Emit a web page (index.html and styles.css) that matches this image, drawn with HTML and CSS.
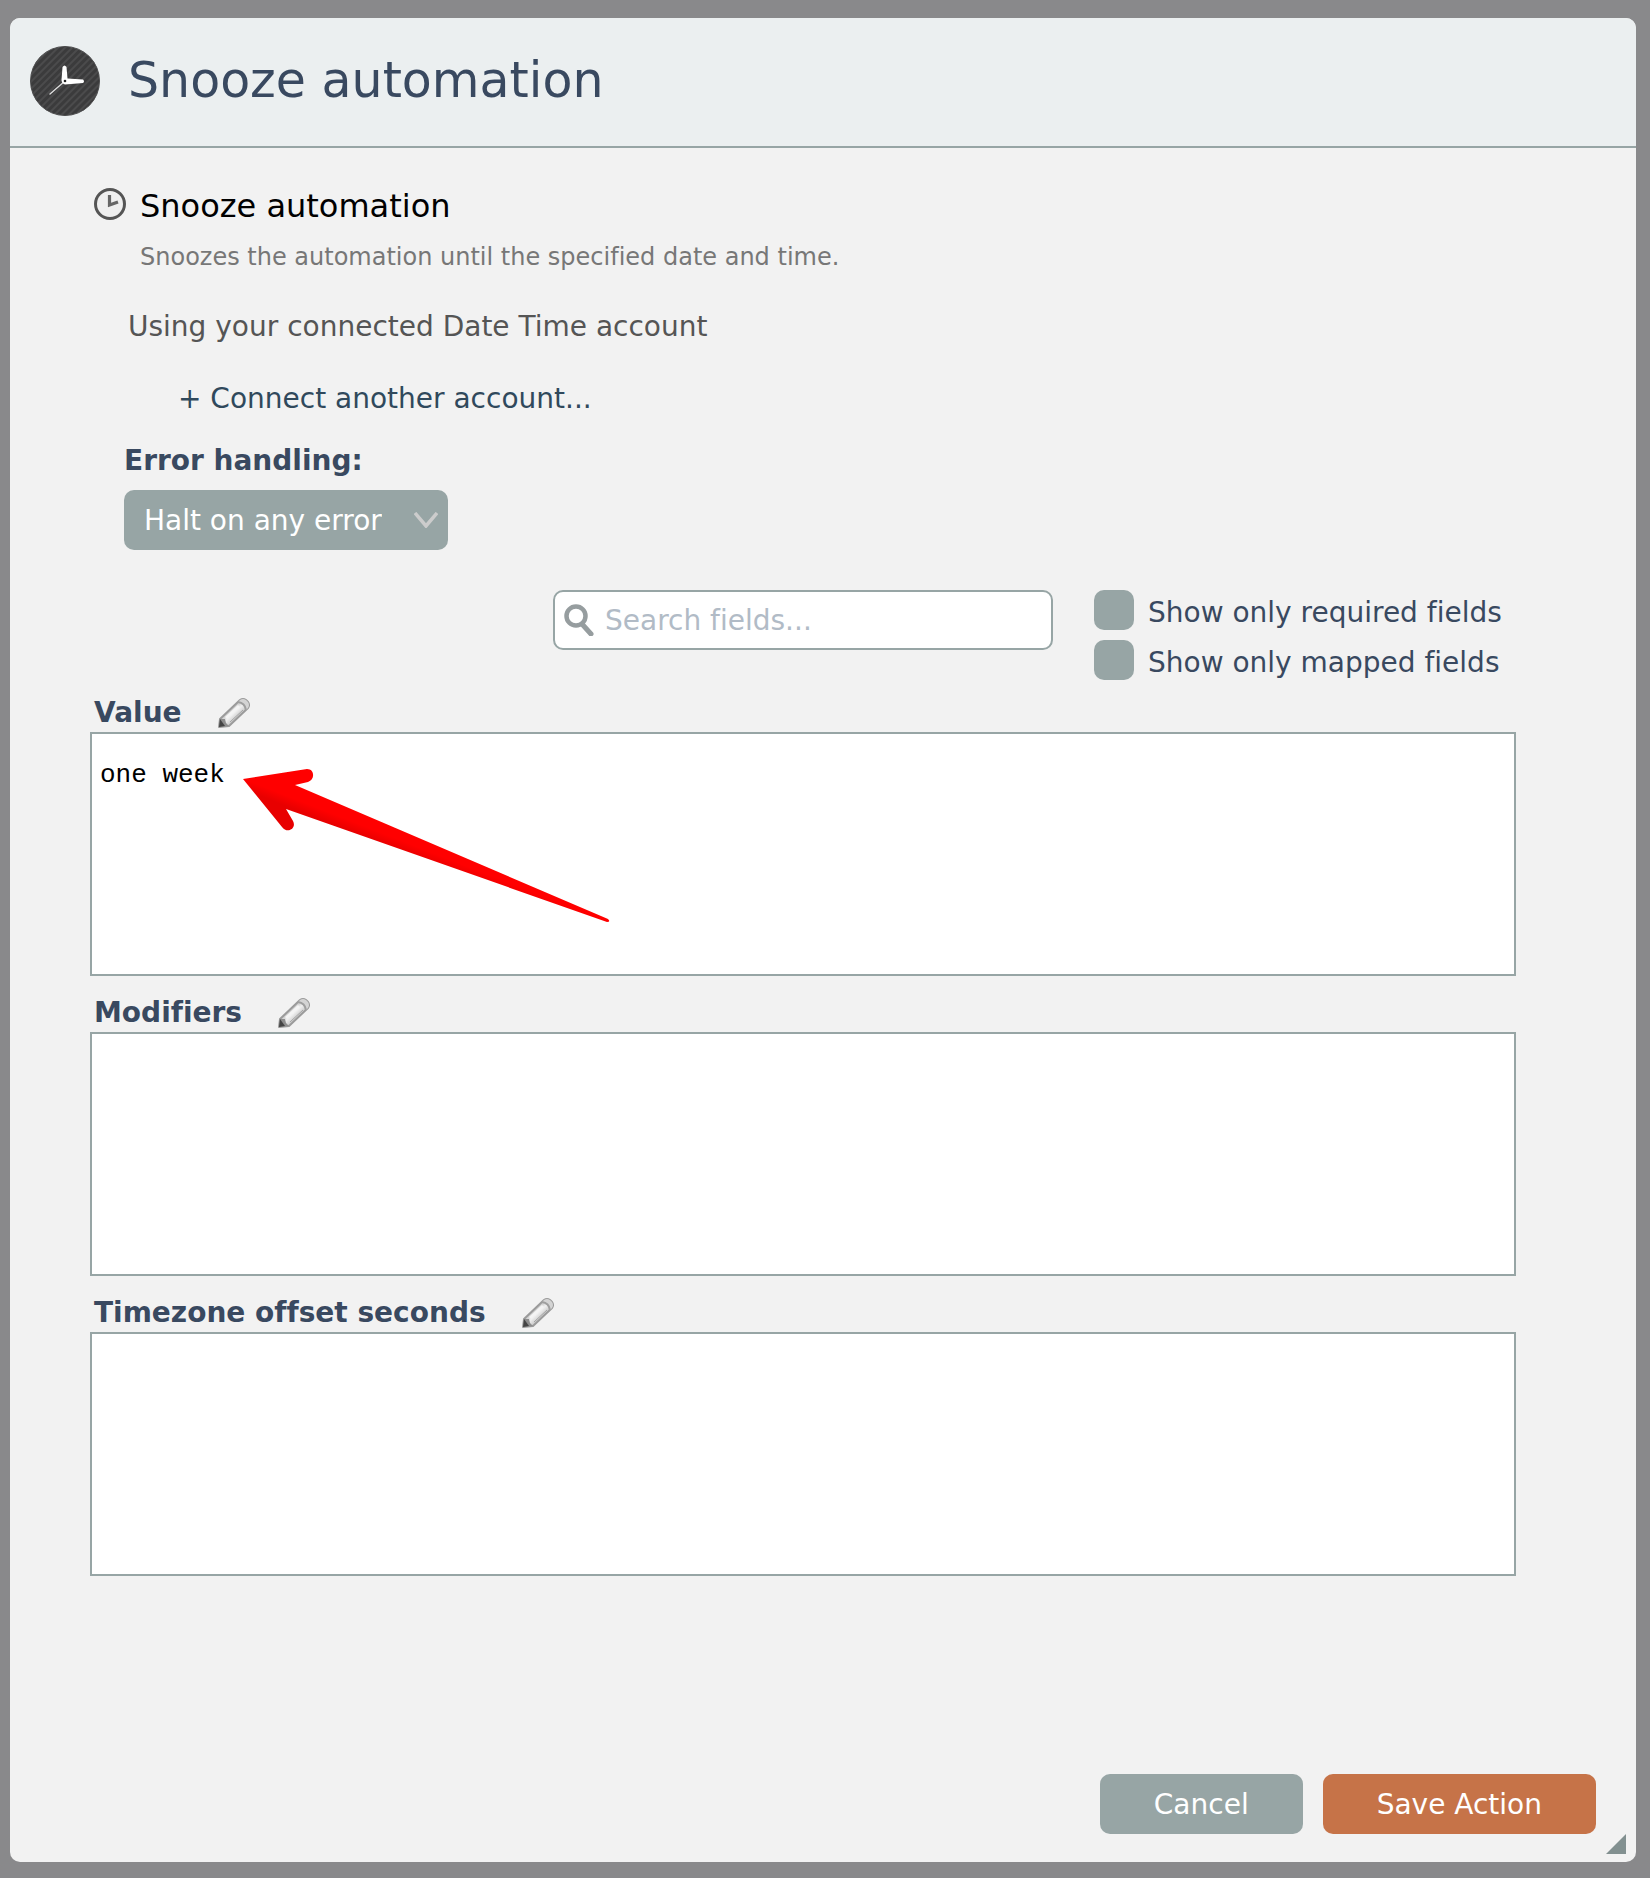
FILE: index.html
```html
<!DOCTYPE html>
<html lang="en">
<head>
    <meta charset="UTF-8">
    <meta name="viewport" content="width=device-width, initial-scale=1.0">
    <title>Snooze automation</title>
    <link rel="stylesheet" href="styles.css">
</head>
<body>

    <!-- shared pencil icon -->
    <svg class="sprite" aria-hidden="true">
        <defs>
            <linearGradient id="pencil-fill" x1="0" y1="0" x2="1" y2="1">
                <stop offset="0.3" stop-color="#a8a8a8"/>
                <stop offset="0.5" stop-color="#f0f0f0"/>
                <stop offset="0.75" stop-color="#a8a8a8"/>
            </linearGradient>
        </defs>
        <symbol id="pencil" viewBox="0 0 32 32">
            <path d="M2 22 L22 3 Q25 1 28 3 L30 5 Q32 8 30 11 L11 29 L1 30 Z" fill="url(#pencil-fill)" stroke="#9b9b9b" stroke-width="2" stroke-linejoin="round"/>
            <path d="M22 3 Q25 1 28 3 L30 5 Q32 8 30 11 L28 13 Q27 6 20 5 Z" fill="#d4d4d4"/>
            <path d="M20 5 Q27 6 28 13" fill="none" stroke="#9f9f9f" stroke-width="2"/>
            <path d="M8 21 L21 9" stroke="#f4f4f4" stroke-width="3"/>
            <path d="M12 25 L25 13" stroke="#a3a3a3" stroke-width="1"/>
            <path d="M2 22 L7 22 L8 26 L11 29 L1 30 Z" fill="#8d8d8d"/>
            <path d="M2 22 L1 30 L7 29 Z" fill="#444"/>
        </symbol>
    </svg>

    <div class="dialog" role="dialog" aria-labelledby="dialog-title">
        <header class="dialog-header">
            <svg class="app-icon" viewBox="0 0 70 70" aria-hidden="true">
                <defs>
                    <pattern id="stripes" width="5" height="5" patternUnits="userSpaceOnUse" patternTransform="rotate(45)">
                        <rect width="5" height="5" fill="#3b3b3c"/>
                        <rect width="2" height="5" fill="#4b4b4c"/>
                    </pattern>
                </defs>
                <circle cx="35" cy="35" r="34.5" fill="url(#stripes)" stroke="#4a4a4b"/>
                <path d="M35 35 L20 48" stroke="#ddd" stroke-width="1.4" stroke-linecap="round"/>
                <path d="M32.500 21 Q34.5 18 36.500 21 L37.500 32.500 L53 33.500 Q55 35.500 53 37 L35 38.500 Q31.500 37 31.500 34 Z" fill="#fff"/>
                <circle cx="35" cy="35" r="1.300" fill="#222"/>
            </svg>
            <h1 id="dialog-title">Snooze automation</h1>
        </header>

        <form class="dialog-body">
            <div class="action">
                <svg class="action-icon" viewBox="0 0 32 32" aria-hidden="true">
                    <circle cx="16" cy="16" r="14.5" fill="#efefef" stroke="#555" stroke-width="3"/>
                    <path d="M15.500 7 V17 L24 14" fill="none" stroke="#666" stroke-width="3.2"/>
                </svg>
                <div>
                    <h2>Snooze automation</h2>
                    <p class="description">Snoozes the automation until the specified date and time.</p>
                </div>
            </div>

            <p class="account">Using your connected Date Time account</p>
            <a class="connect" href="#">+ Connect another account...</a>

            <div class="error-handling">
                <label for="error-mode">Error handling:</label>
                <div class="select-wrap">
                    <select id="error-mode">
                        <option>Halt on any error</option>
                    </select>
                    <svg class="chevron" viewBox="0 0 24 16" aria-hidden="true">
                        <path d="M1 1 L12 14 L23 1" fill="none" stroke="#ccc" stroke-width="3.500"/>
                    </svg>
                </div>
            </div>

            <div class="filters">
                <div class="search">
                    <svg class="search-icon" viewBox="0 0 32 32" aria-hidden="true">
                        <circle cx="13" cy="12" r="9.500" fill="none" stroke="#969d9f" stroke-width="4.500"/>
                        <path d="M19 20 L28 30" stroke="#969d9f" stroke-width="5" stroke-linecap="round"/>
                    </svg>
                    <input type="text" placeholder="Search fields..." aria-label="Search fields">
                </div>
                <div class="checks">
                    <label><input type="checkbox"> Show only required fields</label>
                    <label><input type="checkbox"> Show only mapped fields</label>
                </div>
            </div>

            <div class="field">
                <div class="field-label">
                    <label for="value">Value</label>
                    <button type="button" aria-label="Edit Value"><svg><use href="#pencil"/></svg></button>
                </div>
                <div class="field-box">
                    <textarea id="value" spellcheck="false">one week</textarea>
                    <svg class="arrow" viewBox="0 0 376 162" aria-hidden="true">
                        <defs>
                            <linearGradient id="arrow-fill" gradientUnits="userSpaceOnUse" x1="100" y1="40" x2="91" y2="63">
                                <stop offset="0.4" stop-color="#ff0000"/>
                                <stop offset="0.8" stop-color="#e80000"/>
                            </linearGradient>
                        </defs>
                        <path d="M3 13 L67 3 C75 3 75 14 68 16 L55 19 L368 153 Q371 156 367 156 L46 43 L53 55 C57 63 47 68 42 61 Z" fill="url(#arrow-fill)"/>
                    </svg>
                </div>
            </div>

            <div class="field">
                <div class="field-label">
                    <label for="modifiers">Modifiers</label>
                    <button type="button" aria-label="Edit Modifiers"><svg><use href="#pencil"/></svg></button>
                </div>
                <div class="field-box">
                    <textarea id="modifiers"></textarea>
                </div>
            </div>

            <div class="field">
                <div class="field-label">
                    <label for="offset">Timezone offset seconds</label>
                    <button type="button" aria-label="Edit Timezone offset seconds"><svg><use href="#pencil"/></svg></button>
                </div>
                <div class="field-box">
                    <textarea id="offset"></textarea>
                </div>
            </div>
        </form>

        <footer class="dialog-footer">
            <button type="button" class="cancel">Cancel</button>
            <button type="button" class="save">Save Action</button>
        </footer>
        <span class="resize-handle"></span>
    </div>

</body>
</html>
```
FILE: styles.css
```css
* {
    box-sizing: border-box;
}

body {
    margin: 0;
    padding: 18px 14px 16px 10px;
    min-height: 100vh;
    display: flex;
    background: #89898b;
    font-family: Verdana, "DejaVu Sans", sans-serif;
    font-size: 28px;
    line-height: 38px;
    font-variant-ligatures: none;
    color: #394960;
}

h1, h2, p {
    margin: 0;
    font-weight: normal;
}

.sprite {
    position: absolute;
    width: 0;
    height: 0;
}

.dialog {
    position: relative;
    flex: 1;
    display: flex;
    flex-direction: column;
    background: #f2f2f2;
    border-radius: 10px;
    overflow: hidden;
}

/* header */
.dialog-header {
    display: flex;
    align-items: center;
    gap: 28px;
    padding: 28px 20px 30px;
    background: #ebeff0;
    border-bottom: 2px solid #97a5a5;
}

.dialog-header h1 {
    font-size: 49px;
    line-height: 58px;
}

.app-icon {
    width: 70px;
    height: 70px;
}

/* body */
.dialog-body {
    flex: 1;
    padding: 38px 120px 40px 80px;
}

.action {
    display: flex;
    gap: 14px;
    padding-left: 4px;
}

.action-icon {
    flex: none;
    width: 32px;
    height: 32px;
    margin-top: 2px;
}

.action h2 {
    font-size: 32px;
    line-height: 40px;
    color: #000;
}

.description {
    margin-top: 14px;
    font-size: 24px;
    line-height: 34px;
    color: #777;
}

.account {
    margin-top: 34px;
    padding-left: 38px;
    color: #555;
}

.connect {
    display: block;
    width: fit-content;
    margin: 34px 0 24px 88px;
    color: #30495c;
    text-decoration: none;
}

.error-handling {
    display: flex;
    flex-direction: column;
    align-items: flex-start;
    gap: 10px;
    padding-left: 34px;
}

.error-handling label,
.field-label label {
    font-weight: bold;
}

.select-wrap {
    position: relative;
}

select {
    appearance: none;
    display: block;
    height: 60px;
    padding: 2px 66px 0 20px;
    border: none;
    border-radius: 10px;
    background: #97a5a5;
    color: #fff;
    font: inherit;
}

.chevron {
    position: absolute;
    right: 10px;
    top: 22px;
    width: 24px;
    height: 16px;
    pointer-events: none;
}

/* search and filters */
.filters {
    display: grid;
    grid-template-columns: 1fr 500px 1fr;
    column-gap: 41px;
    align-items: start;
    margin: 40px 0 8px;
}

.search {
    grid-column: 2;
    display: flex;
    align-items: center;
    gap: 10px;
    height: 60px;
    padding: 0 8px;
    background: #fff;
    border: 2px solid #97a5a5;
    border-radius: 10px;
}

.search-icon {
    flex: none;
    width: 32px;
    height: 32px;
}

.search input {
    flex: 1;
    min-width: 0;
    padding: 2px 0 0;
    border: none;
    outline: none;
    background: none;
    font: inherit;
    color: #394960;
}

.search input::placeholder {
    color: #b1bbc6;
}

.checks {
    display: flex;
    flex-direction: column;
    gap: 4px;
    white-space: nowrap;
}

.checks label {
    display: flex;
    gap: 14px;
    line-height: 46px;
}

.checks input {
    appearance: none;
    flex: none;
    width: 40px;
    height: 40px;
    margin: 0;
    border-radius: 10px;
    background: #97a5a5;
}

.checks input:checked {
    background: #394960;
}

/* fields */
.field {
    margin-bottom: 18px;
}

.field-label {
    display: flex;
    align-items: center;
    gap: 36px;
    padding-left: 4px;
}

.field-label button {
    height: 32px;
    padding: 0;
    border: none;
    background: none;
    cursor: pointer;
}

.field-label svg {
    display: block;
    width: 32px;
    height: 32px;
}

.field-box {
    position: relative;
}

textarea {
    display: block;
    width: 100%;
    height: 244px;
    padding: 24px 8px;
    border: 2px solid #97a5a5;
    background: #fff;
    color: #000;
    font-family: "Courier New", "Liberation Mono", monospace;
    font-size: 26px;
    line-height: 34px;
    resize: none;
}

.arrow {
    position: absolute;
    left: 150px;
    top: 34px;
    width: 376px;
    height: 162px;
    pointer-events: none;
}

/* footer */
.dialog-footer {
    display: flex;
    justify-content: flex-end;
    gap: 20px;
    padding: 0 40px 28px;
}

.dialog-footer button {
    height: 60px;
    padding: 2px 54px 0;
    border: none;
    border-radius: 10px;
    color: #fff;
    font: inherit;
    cursor: pointer;
}

.cancel {
    background: #97a5a5;
}

.save {
    background: #c67348;
}

.resize-handle {
    position: absolute;
    right: 10px;
    bottom: 8px;
    width: 20px;
    height: 20px;
    background: #829090;
    clip-path: polygon(100% 0, 100% 100%, 0 100%);
}
```
